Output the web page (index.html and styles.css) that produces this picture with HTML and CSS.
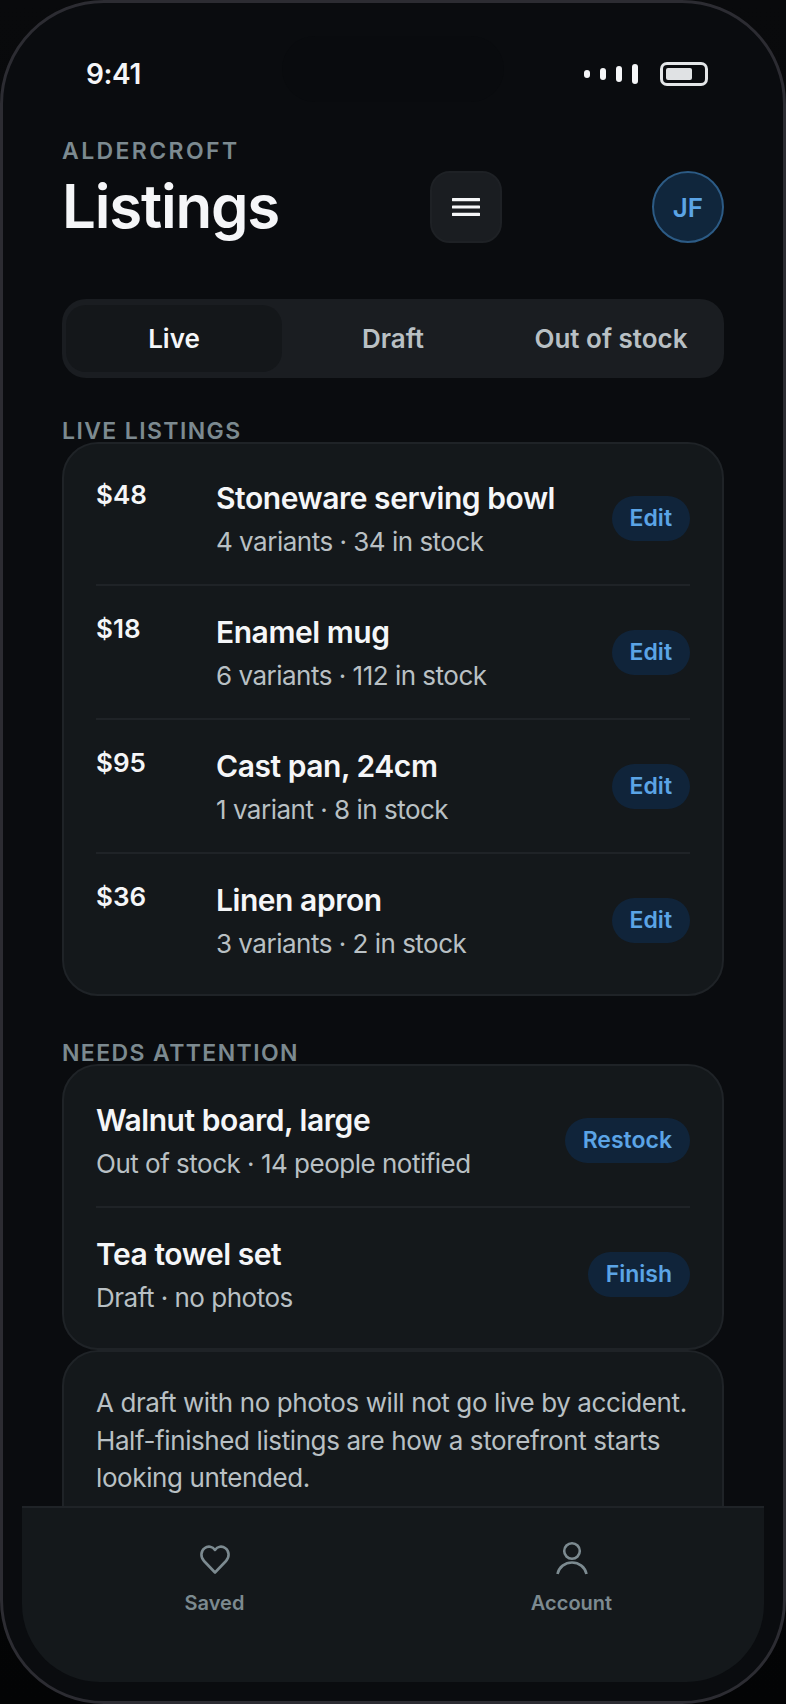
FILE: index.html
```html
<!DOCTYPE html>
<html lang="en">
<head>
    <meta charset="UTF-8">
    <meta name="viewport" content="width=device-width, initial-scale=1.0">
    <title>Listings</title>
    <link rel="stylesheet" href="styles.css">
</head>
<body>
    <div class="phone">
        <div class="island"></div>

        <div class="status">
            <span class="time">9:41</span>
            <div class="status-icons">
                <div class="signal">
                    <i class="bar-1"></i>
                    <i class="bar-2"></i>
                    <i class="bar-3"></i>
                    <i class="bar-4"></i>
                </div>
                <div class="battery"><i></i></div>
            </div>
        </div>

        <header class="header">
            <div>
                <div class="eyebrow">ALDERCROFT</div>
                <h1>Listings</h1>
            </div>
            <button class="menu-btn" aria-label="Menu">
                <svg width="28" height="18" viewBox="0 0 28 18"><path d="M1 1.700h26M1 9h26M1 16.300h26" stroke="#f5f6f8" stroke-width="3.200" stroke-linecap="round"/></svg>
            </button>
            <div class="avatar">JF</div>
        </header>

        <div class="tabs">
            <div class="tab active">Live</div>
            <div class="tab">Draft</div>
            <div class="tab">Out of stock</div>
        </div>

        <div class="section-label">LIVE LISTINGS</div>
        <div class="card">
            <div class="row">
                <div class="price">$48</div>
                <div class="info">
                    <div class="name">Stoneware serving bowl</div>
                    <div class="sub">4 variants · 34 in stock</div>
                </div>
                <button class="pill">Edit</button>
            </div>
            <div class="row">
                <div class="price">$18</div>
                <div class="info">
                    <div class="name">Enamel mug</div>
                    <div class="sub">6 variants · 112 in stock</div>
                </div>
                <button class="pill">Edit</button>
            </div>
            <div class="row">
                <div class="price">$95</div>
                <div class="info">
                    <div class="name">Cast pan, 24cm</div>
                    <div class="sub">1 variant · 8 in stock</div>
                </div>
                <button class="pill">Edit</button>
            </div>
            <div class="row">
                <div class="price">$36</div>
                <div class="info">
                    <div class="name">Linen apron</div>
                    <div class="sub">3 variants · 2 in stock</div>
                </div>
                <button class="pill">Edit</button>
            </div>
        </div>

        <div class="section-label second">NEEDS ATTENTION</div>
        <div class="card">
            <div class="row">
                <div class="info">
                    <div class="name">Walnut board, large</div>
                    <div class="sub">Out of stock · 14 people notified</div>
                </div>
                <button class="pill">Restock</button>
            </div>
            <div class="row">
                <div class="info">
                    <div class="name">Tea towel set</div>
                    <div class="sub">Draft · no photos</div>
                </div>
                <button class="pill">Finish</button>
            </div>
        </div>

        <div class="note">A draft with no photos will not go live by accident. Half-finished listings are how a storefront starts looking untended.</div>

        <nav class="tabbar">
            <div class="tabbar-item">
                <svg width="36" height="36" viewBox="0 0 36 36" fill="none" stroke="#7c8a90" stroke-width="2.600" stroke-linejoin="round"><path d="M18 32.500L7 21C3.200 17 3.800 11 7.500 8.300C11 5.600 15.500 6.300 18 10C20.500 6.300 25 5.600 28.500 8.300C32.200 11 32.800 17 29 21Z"/></svg>
                <span>Saved</span>
            </div>
            <div class="tabbar-item">
                <svg width="36" height="36" viewBox="0 0 36 36" fill="none" stroke="#7c8a90" stroke-width="2.600"><circle cx="18" cy="11" r="7.800"/><path d="M3.500 34C5 27 11 22.500 18 22.500S31 27 32.500 34"/></svg>
                <span>Account</span>
            </div>
        </nav>
    </div>
</body>
</html>
```

FILE: styles.css
```css
* {
    box-sizing: border-box;
}
html, body {
    margin: 0;
    height: 1704px;
    background: linear-gradient(#090a0c, #030405);
    overflow: hidden;
}
body {
    font-family: Inter, "Liberation Sans", sans-serif;
    color: #f5f6f8;
}
button {
    font-family: inherit;
    border: none;
    cursor: pointer;
}
.phone {
    position: relative;
    width: 786px;
    height: 1704px;
    padding: 0 59px;
    background: #0a0c0f;
    border: 3px solid #2c2c32;
    border-radius: 104px;
    overflow: hidden;
}
.island {
    position: absolute;
    top: 33px;
    left: 279px;
    width: 222px;
    height: 66px;
    border-radius: 33px;
    background: #090b0e;
}

/* status bar */
.status {
    display: flex;
    justify-content: space-between;
    align-items: center;
    height: 44px;
    margin: 49px 16px 0 24px;
}
.time {
    font-size: 28px;
    font-weight: 600;
    letter-spacing: -0.4px;
}
.status-icons {
    display: flex;
    align-items: center;
    gap: 22px;
}
.signal {
    display: flex;
    align-items: center;
    gap: 10px;
}
.signal i {
    width: 6px;
    border-radius: 3px;
    background: #f5f6f8;
}
.bar-1 { height: 8px; }
.bar-2 { height: 12px; }
.bar-3 { height: 16px; }
.bar-4 { height: 20px; }
.battery {
    width: 48px;
    height: 24px;
    padding: 3px;
    border: 3px solid #e4e6e8;
    border-radius: 7px;
}
.battery i {
    display: block;
    width: 26px;
    height: 12px;
    border-radius: 2px;
    background: #e0e2e4;
}

/* header */
.header {
    display: flex;
    justify-content: space-between;
    align-items: flex-end;
    margin-top: 41px;
}
.eyebrow {
    font-size: 23px;
    font-weight: 600;
    letter-spacing: 2.400px;
    line-height: 28px;
    color: #7c8a90;
}
h1 {
    margin: 5px 0 0;
    font-size: 60px;
    font-weight: 600;
    letter-spacing: -1.200px;
    line-height: 73px;
}
.menu-btn {
    display: flex;
    align-items: center;
    justify-content: center;
    width: 72px;
    height: 72px;
    border-radius: 20px;
    background: #1a1d21;
    border: 2px solid #1e2125;
}
.avatar {
    display: flex;
    align-items: center;
    justify-content: center;
    width: 72px;
    height: 72px;
    border-radius: 50%;
    background: #10263c;
    border: 2px solid #2c5b85;
    color: #5ba4e6;
    font-size: 26px;
    font-weight: 600;
}

/* segmented tabs */
.tabs {
    display: grid;
    grid-template-columns: repeat(3, 1fr);
    height: 79px;
    margin-top: 56px;
    padding: 6px 4px;
    border-radius: 24px;
    background: #1a1d21;
}
.tab {
    display: flex;
    align-items: center;
    justify-content: center;
    font-size: 26px;
    font-weight: 600;
    color: #b9c0c4;
}
.tab.active {
    margin-right: 2px;
    color: #f5f6f8;
    background: #14171a;
    border-radius: 20px;
}

/* cards */
.section-label {
    margin-top: 43px;
    font-size: 23px;
    font-weight: 600;
    letter-spacing: 1.400px;
    line-height: 21px;
    color: #7c8a90;
}
.section-label.second {
    margin-top: 47px;
}
.card {
    padding: 8px 32px;
    background: #14181b;
    border: 2px solid #1f2327;
    border-radius: 36px;
}
.row {
    display: flex;
    align-items: center;
    height: 134px;
    border-bottom: 2px solid #1f2327;
}
.row:last-child {
    height: 132px;
    border-bottom: none;
}
.price {
    align-self: flex-start;
    width: 120px;
    margin-top: 26px;
    font-size: 26px;
    font-weight: 600;
    line-height: 34px;
}
.info {
    flex: 1;
    min-width: 0;
    padding-top: 2px;
}
.name {
    font-size: 30px;
    font-weight: 600;
    letter-spacing: -0.450px;
    line-height: 40px;
}
.sub {
    margin-top: 6px;
    font-size: 26px;
    letter-spacing: -0.500px;
    line-height: 36px;
    color: #b9c0c4;
}
.pill {
    height: 45px;
    padding: 0 18px;
    border-radius: 23px;
    background: #10243a;
    color: #5ba4e6;
    font-size: 23px;
    font-weight: 600;
}
.note {
    height: 260px;
    padding: 32px 24px 32px 32px;
    background: #14181b;
    border: 2px solid #1f2327;
    border-radius: 36px;
    font-size: 26px;
    letter-spacing: -0.400px;
    line-height: 37.700px;
    color: #b9c0c4;
}

/* bottom bar sits over the scrolled content */
.tabbar {
    position: absolute;
    left: 19px;
    right: 19px;
    bottom: 19px;
    display: grid;
    grid-template-columns: 1fr 1fr;
    height: 176px;
    padding: 0 14px;
    background: #14181b;
    border-top: 2px solid #1f2327;
    border-radius: 0 0 78px 78px;
}
.tabbar-item {
    display: flex;
    flex-direction: column;
    align-items: center;
    gap: 15px;
    padding-top: 32px;
    font-size: 20px;
    font-weight: 600;
    line-height: 24px;
    color: #7c8a90;
}
```
